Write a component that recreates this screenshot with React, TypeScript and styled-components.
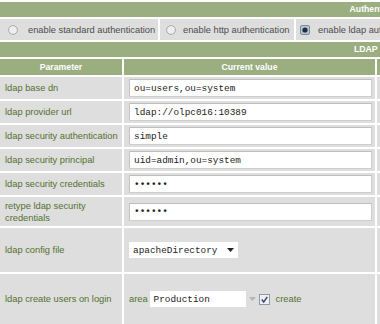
import React from 'react';
import styled, {createGlobalStyle} from 'styled-components';

const GlobalStyle = createGlobalStyle`
    html, body {
        margin: 0;
        padding: 0;
        background: #fff;
        overflow: hidden;
    }
    body {
        font-family: "Liberation Sans", Arial, sans-serif;
    }
`;

const green = '#9bae7f';
const grey = '#dedede';
const olive = '#55702f';

const Page = styled.div`
    width: 760px;
    padding-top: 2px;
    display: flex;
    flex-direction: column;
    gap: 2px;
`;

const SectionTitle = styled.div`
    height: 15px;
    line-height: 15px;
    background: ${green};
    color: #fff;
    font-weight: bold;
    font-size: 8.7px;
    text-align: center;
`;

const AuthRow = styled.div`
    display: grid;
    grid-template-columns: 158px 134px 1fr;
    gap: 2px;
    height: 21px;
`;

const AuthCell = styled.label<{$pad: number; $gap: number}>`
    background: ${grey};
    display: flex;
    align-items: center;
    padding-left: ${({$pad}) => $pad}px;
    gap: ${({$gap}) => $gap}px;
    color: #4d4d4d;
    font-size: 9.3px;
    white-space: nowrap;
    overflow: hidden;
`;

const Grid = styled.div`
    display: grid;
    grid-template-columns: 122px 251px 1fr;
    grid-template-rows: 16px repeat(5, 22px) 29px 44px 50px;
    gap: 2px;
`;

const HeadCell = styled.div`
    background: ${green};
    line-height: 16px;
    color: #fff;
    font-weight: bold;
    font-size: 8.7px;
    text-align: center;
`;

const LabelCell = styled.div`
    background: ${grey};
    color: ${olive};
    font-size: 9.3px;
    line-height: 12px;
    padding: 0 2px 0 5px;
    display: flex;
    align-items: center;
`;

const ValueCell = styled.div`
    background: ${grey};
    display: flex;
    align-items: center;
    padding-left: 5px;
`;

const Filler = styled.div`
    background: ${grey};
`;

const TextInput = styled.input<{$secret?: boolean}>`
    box-sizing: border-box;
    width: 243px;
    height: 18px;
    margin: 0;
    padding: 0 0 0 4px;
    border: 1px solid #cdcdcd;
    border-top-color: #bdbdbd;
    border-left-color: #c4c4c4;
    background: #fff;
    font-family: "Liberation Mono", "Courier New", monospace;
    font-size: 9.4px;
    font-weight: ${({$secret}) => ($secret ? 'bold' : 'normal')};
    color: #222;
    outline: none;
`;

const SelectBox = styled.div<{$width: number}>`
    box-sizing: border-box;
    width: ${({$width}) => $width}px;
    height: 16px;
    background: #fff;
    display: flex;
    align-items: center;
    justify-content: space-between;
    padding: 0 4px;
    font-family: "Liberation Mono", "Courier New", monospace;
    font-size: 9.4px;
    color: #222;
`;

const Inline = styled.div`
    display: flex;
    align-items: center;
    color: ${olive};
    font-size: 9.3px;
`;

const Spaced = styled.span<{$left: number}>`
    display: flex;
    margin-left: ${({$left}) => $left}px;
`;

const Radio = ({checked}: {checked?: boolean}) =>
    checked ? (
        <svg width="10" height="10" viewBox="0 0 10 10">
            <rect x="0.5" y="0.5" width="9" height="9" rx="1.5" fill="#b9c4cf" stroke="#7d8c9b" />
            <circle cx="5" cy="5" r="2.6" fill="#1f2d44" />
        </svg>
    ) : (
        <svg width="10" height="10" viewBox="0 0 10 10">
            <circle cx="5" cy="5" r="4.4" fill="#eeeeee" stroke="#a9a9a9" />
        </svg>
    );

const Caret = ({color}: {color: string}) => (
    <svg width="7" height="4" viewBox="0 0 7 4">
        <path d="M0 0h7L3.5 4z" fill={color} />
    </svg>
);

const Checkbox = () => (
    <svg width="11" height="11" viewBox="0 0 11 11">
        <rect x="0.5" y="0.5" width="10" height="10" fill="#eef0f3" stroke="#8f9aa6" />
        <path d="M2.8 5.6l1.9 2.3 3.6-5" fill="none" stroke="#3a4a66" strokeWidth="1.5" />
    </svg>
);

const rows: {label: string; value: string; password?: boolean}[] = [
    {label: 'ldap base dn', value: 'ou=users,ou=system'},
    {label: 'ldap provider url', value: 'ldap://olpc016:10389'},
    {label: 'ldap security authentication', value: 'simple'},
    {label: 'ldap security principal', value: 'uid=admin,ou=system'},
    {label: 'ldap security credentials', value: 'secret', password: true},
    {label: 'retype ldap security credentials', value: 'secret', password: true},
];

export default function App() {
    return (
        <>
            <GlobalStyle />
            <Page>
                <SectionTitle>Authentication</SectionTitle>
                <AuthRow>
                    <AuthCell $pad={8} $gap={10}>
                        <Radio />
                        enable standard authentication
                    </AuthCell>
                    <AuthCell $pad={6} $gap={7}>
                        <Radio />
                        enable http authentication
                    </AuthCell>
                    <AuthCell $pad={4} $gap={8}>
                        <Radio checked />
                        enable ldap authentication
                    </AuthCell>
                </AuthRow>
                <SectionTitle>LDAP server</SectionTitle>
                <Grid>
                    <HeadCell>Parameter</HeadCell>
                    <HeadCell>Current value</HeadCell>
                    <HeadCell />
                    {rows.map(row => (
                        <React.Fragment key={row.label}>
                            <LabelCell>{row.label}</LabelCell>
                            <ValueCell>
                                <TextInput
                                    type={row.password ? 'password' : 'text'}
                                    $secret={row.password}
                                    defaultValue={row.value}
                                    readOnly
                                />
                            </ValueCell>
                            <Filler />
                        </React.Fragment>
                    ))}
                    <LabelCell>ldap config file</LabelCell>
                    <ValueCell>
                        <SelectBox $width={109}>
                            apacheDirectory
                            <Caret color="#222" />
                        </SelectBox>
                    </ValueCell>
                    <Filler />
                    <LabelCell>ldap create users on login</LabelCell>
                    <ValueCell>
                        <Inline>
                            area
                            <Spaced $left={2}>
                                <SelectBox $width={96}>Production</SelectBox>
                            </Spaced>
                            <Spaced $left={3}>
                                <Caret color="#b5b5b5" />
                            </Spaced>
                            <Spaced $left={3}>
                                <Checkbox />
                            </Spaced>
                            <Spaced $left={6}>create</Spaced>
                        </Inline>
                    </ValueCell>
                    <Filler />
                </Grid>
            </Page>
        </>
    );
}
